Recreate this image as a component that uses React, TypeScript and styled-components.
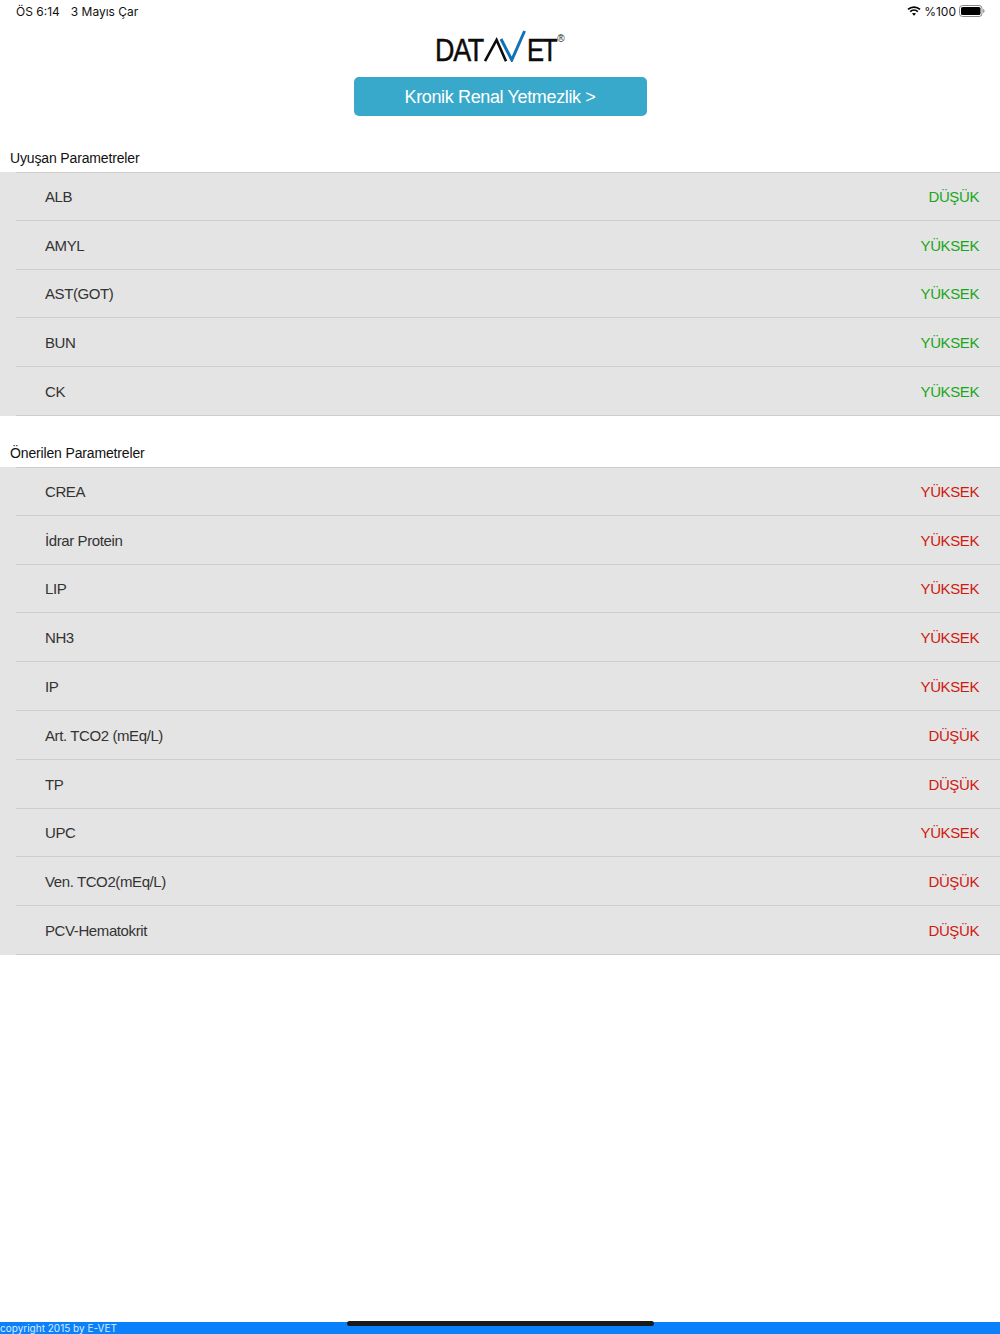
import React from "react";
import styled, { createGlobalStyle } from "styled-components";

const Global = createGlobalStyle`
  html, body { margin: 0; padding: 0; background: #fff; }
  body { font-family: "Liberation Sans", Arial, sans-serif; }
`;

const Page = styled.div`
  position: relative;
  display: flex;
  flex-direction: column;
  height: 1334px;
  overflow: hidden;
`;

const StatusBar = styled.div`
  display: flex;
  justify-content: space-between;
  align-items: center;
  height: 22px;
  margin-bottom: 2px;
  padding: 0 15px 0 16px;
  font-family: Inter, "Liberation Sans", sans-serif;
  font-size: 12px;
  color: #111;
`;

const StatusGroup = styled.div<{ $gap: number }>`
  display: flex;
  align-items: center;
  gap: ${(p) => p.$gap}px;
`;

const Header = styled.div`
  display: flex;
  flex-direction: column;
  align-items: center;
  height: 108px;
`;

const Logo = styled.div`
  display: flex;
  align-items: flex-start;
  height: 32px;
  margin-top: 6px;
  margin-bottom: 15px;
  color: #0c0c0c;
`;

const LogoWord = styled.span<{ $width: number; $scale: number; $spacing: number }>`
  display: block;
  width: ${(p) => p.$width}px;
  margin-top: 4px;
  font-family: "Liberation Sans", sans-serif;
  font-size: 32px;
  line-height: 32px;
  letter-spacing: ${(p) => p.$spacing}px;
  white-space: nowrap;
  -webkit-text-stroke: 0.5px #0c0c0c;
  transform: scaleX(${(p) => p.$scale});
  transform-origin: left center;
`;

const Reg = styled.span`
  display: block;
  width: 8px;
  margin-top: 4px;
  font-size: 10px;
  line-height: 10px;
  text-align: center;
  color: #222;
`;

const PrimaryButton = styled.button`
  width: 293px;
  height: 39px;
  border: none;
  border-radius: 5px;
  background: #39a9cb;
  color: #fff;
  font-family: "Liberation Sans", sans-serif;
  font-size: 18px;
  letter-spacing: -0.36px;
  padding: 2px 0 0;
`;

const SectionTitle = styled.div<{ $top: number }>`
  margin-top: ${(p) => p.$top}px;
  height: 26px;
  line-height: 24px;
  padding-left: 10px;
  font-size: 14px;
  letter-spacing: -0.15px;
  color: #111;
`;

const List = styled.div`
  background: #e4e4e4;
  padding-left: 16px;
`;

const Row = styled.div`
  display: flex;
  justify-content: space-between;
  align-items: center;
  box-sizing: border-box;
  height: 48.8px;
  padding: 1px 21px 0 29px;
  border-bottom: 1px solid #cdcdcd;
  font-size: 15px;
  letter-spacing: -0.4px;
  color: #333;
`;

const TopRule = styled.div`
  height: 1px;
  margin-bottom: -1px;
  position: relative;
  background: #cdcdcd;
`;

const Level = styled.span<{ $tone: "match" | "suggest" }>`
  color: ${(p) => (p.$tone === "match" ? "#1aa71a" : "#d0190f")};
`;

const Footer = styled.div`
  margin-top: auto;
  height: 12px;
  line-height: 12px;
  background: #0a80fb;
  color: #dcecff;
  font-family: Inter, "Liberation Sans", sans-serif;
  font-size: 10px;
`;

const HomeIndicator = styled.div`
  position: absolute;
  left: 347px;
  bottom: 8px;
  width: 307px;
  height: 5px;
  border-radius: 3px;
  background: #1a1a1a;
`;

const Battery = () => (
  <svg width="26" height="12" viewBox="0 0 26 12">
    <rect x="0.5" y="0.5" width="22.5" height="11" rx="3" fill="none" stroke="#888" />
    <rect x="2" y="2" width="19.5" height="8" rx="1.6" fill="#000" />
    <path d="M24.2 4v4c.8-.3 1.3-1 1.3-2s-.5-1.7-1.3-2z" fill="#888" />
  </svg>
);

const Wifi = () => (
  <svg width="14" height="10" viewBox="0 0 14 10">
    <path d="M1 3.4C4.4.3 9.6.3 13 3.4" fill="none" stroke="#000" strokeWidth="1.7" />
    <path d="M3.2 5.6c2.2-2 5.4-2 7.6 0" fill="none" stroke="#000" strokeWidth="1.7" />
    <path d="M7 9.8 5 7.6c1.2-.9 2.8-.9 4 0z" fill="#000" />
  </svg>
);

const LogoMark = () => (
  <svg width="44" height="32" viewBox="0 0 44 32">
    <path d="M2 31.2 13.6 10 23 31.2" fill="none" stroke="#0c0c0c" strokeWidth="2.6" />
    <path d="M18 9 28.8 30 41.6 1" fill="none" stroke="#1272b8" strokeWidth="3" />
  </svg>
);

const matching: [string, string][] = [
  ["ALB", "DÜŞÜK"],
  ["AMYL", "YÜKSEK"],
  ["AST(GOT)", "YÜKSEK"],
  ["BUN", "YÜKSEK"],
  ["CK", "YÜKSEK"],
];

const suggested: [string, string][] = [
  ["CREA", "YÜKSEK"],
  ["İdrar Protein", "YÜKSEK"],
  ["LIP", "YÜKSEK"],
  ["NH3", "YÜKSEK"],
  ["IP", "YÜKSEK"],
  ["Art. TCO2 (mEq/L)", "DÜŞÜK"],
  ["TP", "DÜŞÜK"],
  ["UPC", "YÜKSEK"],
  ["Ven. TCO2(mEq/L)", "DÜŞÜK"],
  ["PCV-Hematokrit", "DÜŞÜK"],
];

const Section = ({ title, top, rows, tone }: { title: string; top: number; rows: [string, string][]; tone: "match" | "suggest" }) => (
  <>
    <SectionTitle $top={top}>{title}</SectionTitle>
    <List>
      <TopRule />
      {rows.map(([name, level]) => (
        <Row key={name}>
          <span>{name}</span>
          <Level $tone={tone}>{level}</Level>
        </Row>
      ))}
    </List>
  </>
);

export default function App() {
  return (
    <Page>
      <Global />
      <StatusBar>
        <StatusGroup $gap={11}>
          <span>ÖS 6:14</span>
          <span>3 Mayıs Çar</span>
        </StatusGroup>
        <StatusGroup $gap={3}>
          <Wifi />
          <span>%100</span>
          <Battery />
        </StatusGroup>
      </StatusBar>
      <Header>
        <Logo>
          <LogoWord $width={48} $scale={0.84} $spacing={-1.5}>DAT</LogoWord>
          <LogoMark />
          <LogoWord $width={30} $scale={0.8} $spacing={-2.5}>ET</LogoWord>
          <Reg>®</Reg>
        </Logo>
        <PrimaryButton>Kronik Renal Yetmezlik &gt;</PrimaryButton>
      </Header>
      <Section title="Uyuşan Parametreler" top={14} rows={matching} tone="match" />
      <Section title="Önerilen Parametreler" top={25} rows={suggested} tone="suggest" />
      <Footer>copyright 2015 by E-VET</Footer>
      <HomeIndicator />
    </Page>
  );
}
